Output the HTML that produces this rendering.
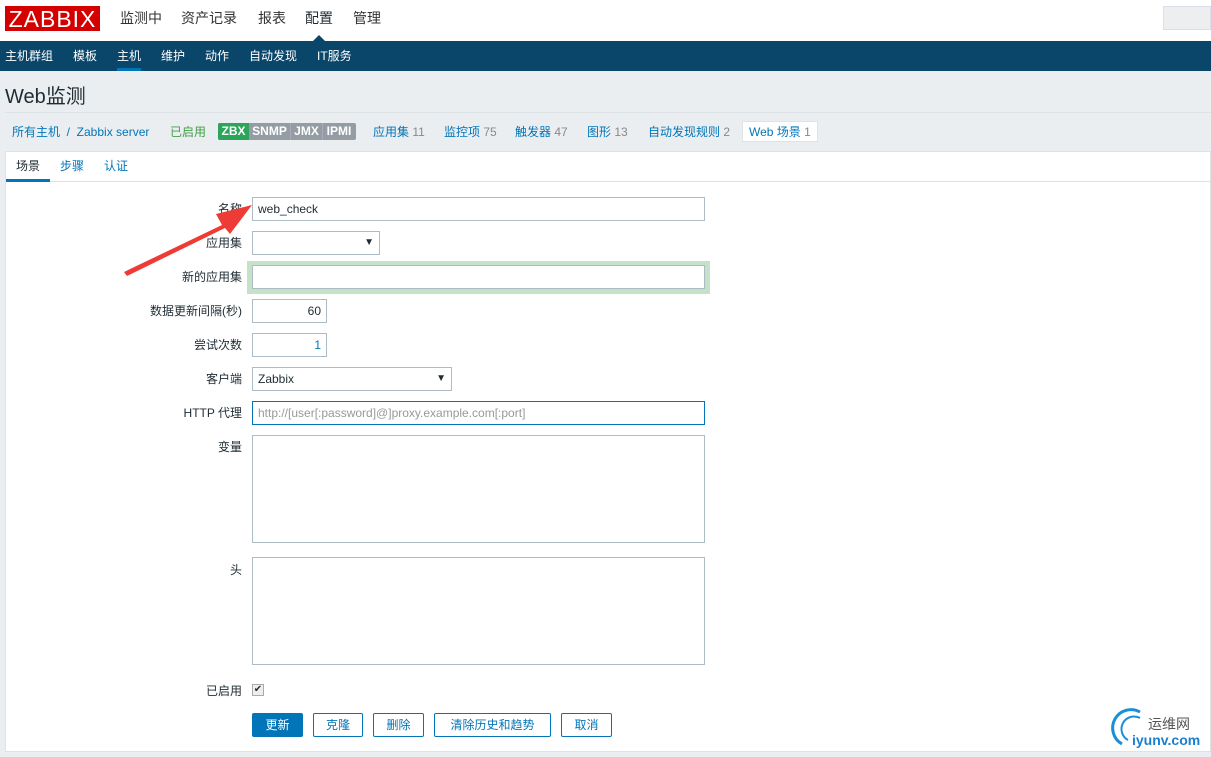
<!DOCTYPE html>
<html><head><meta charset="utf-8"><style>
*{box-sizing:border-box;margin:0;padding:0}
body{width:1211px;height:757px;overflow:hidden;background:#ebeef0;font-family:"Liberation Sans","Noto Sans CJK SC",sans-serif;font-size:12px;color:#1f2c33;position:relative}
.top{position:absolute;left:0;top:0;width:1211px;height:41px;background:#fff}
.logo{position:absolute;left:5px;top:6px;width:95px;height:25px;background:#d40000;color:#fff;font-size:23px;line-height:26px;text-align:center;letter-spacing:1px}
.mm{position:absolute;top:8px;font-size:14px;color:#333}
.nav{position:absolute;left:0;top:41px;width:1211px;height:30px;background:#0a466a}
.sm{position:absolute;top:47px;color:#fff;font-size:12px}
.abs{position:absolute}
.inp{position:absolute;background:#fff;border:1px solid #acbbc4;height:24px;font-size:12px;line-height:22px;padding:0 5px}
.lab{position:absolute;right:969px;font-size:12px;color:#1f2c33}
.btn{position:absolute;top:713px;height:24px;border:1px solid #0275b8;color:#0275b8;background:#fff;text-align:center;line-height:22px;font-size:12px;border-radius:2px}
</style></head><body>
<div class="top"></div>
<div class="logo">ZABBIX</div>
<div class="mm" style="left:120px">监测中</div>
<div class="mm" style="left:181px">资产记录</div>
<div class="mm" style="left:258px">报表</div>
<div class="mm" style="left:305px;color:#1f2c33">配置</div>
<div class="mm" style="left:353px">管理</div>
<div class="abs" style="left:1163px;top:6px;width:48px;height:24px;background:#eceeef;border:1px solid #dde"></div>
<div class="nav"></div>
<div class="abs" style="left:313px;top:35px;width:0;height:0;border-left:6px solid transparent;border-right:6px solid transparent;border-bottom:6px solid #0a466a"></div>
<div class="sm" style="left:5px">主机群组</div>
<div class="sm" style="left:73px">模板</div>
<div class="sm" style="left:117px">主机</div>
<div class="abs" style="left:117px;top:68px;width:24px;height:3px;background:#0275b8"></div>
<div class="sm" style="left:161px">维护</div>
<div class="sm" style="left:205px">动作</div>
<div class="sm" style="left:249px">自动发现</div>
<div class="sm" style="left:317px">IT服务</div>
<div class="abs" style="left:5px;top:80px;font-size:20px;color:#1f2c33">Web监测</div>
<div class="abs" style="left:5px;top:112px;width:1206px;height:1px;background:#dde2e6"></div>
<div class="abs" style="left:12px;top:123px;color:#0275b8">所有主机 &nbsp;/&nbsp; Zabbix server</div>
<div class="abs" style="left:170px;top:123px;color:#429e47">已启用</div>
<div class="abs" style="left:218px;top:123px;height:17px;width:138px;background:#949da3;border-radius:2px;color:#fff;font-weight:bold;font-size:12px;line-height:17px">
<span style="display:inline-block;width:31px;background:#2ca55a;text-align:center;border-radius:2px 0 0 2px">ZBX</span><span style="display:inline-block;width:42px;text-align:center;border-right:1px solid #aab">SNMP</span><span style="display:inline-block;width:32px;text-align:center;border-right:1px solid #aab">JMX</span><span style="display:inline-block;width:32px;text-align:center">IPMI</span></div>
<div class="abs" style="left:373px;top:123px;color:#0275b8">应用集 <span style="color:#888">11</span></div>
<div class="abs" style="left:444px;top:123px;color:#0275b8">监控项 <span style="color:#888">75</span></div>
<div class="abs" style="left:515px;top:123px;color:#0275b8">触发器 <span style="color:#888">47</span></div>
<div class="abs" style="left:587px;top:123px;color:#0275b8">图形 <span style="color:#888">13</span></div>
<div class="abs" style="left:648px;top:123px;color:#0275b8">自动发现规则 <span style="color:#888">2</span></div>
<div class="abs" style="left:742px;top:121px;width:76px;height:21px;background:#fff;border:1px solid #dde2e6;color:#0275b8;padding:1px 6px">Web 场景 <span style="color:#888">1</span></div>
<div class="abs" style="left:5px;top:151px;width:1206px;height:601px;background:#fff;border:1px solid #dde2e6"></div>
<div class="abs" style="left:16px;top:157px;color:#1f2c33">场景</div>
<div class="abs" style="left:60px;top:157px;color:#0275b8">步骤</div>
<div class="abs" style="left:104px;top:157px;color:#0275b8">认证</div>
<div class="abs" style="left:6px;top:181px;width:1205px;height:1px;background:#dde2e6"></div>
<div class="abs" style="left:6px;top:179px;width:44px;height:3px;background:#0275b8"></div>

<div class="lab" style="top:200px">名称</div><div class="inp" style="left:252px;top:197px;width:453px">web_check</div>
<div class="lab" style="top:234px">应用集</div><div class="inp" style="left:252px;top:231px;width:128px;text-align:right;font-size:10px">▼</div>
<div class="abs" style="left:247px;top:261px;width:463px;height:33px;background:#c5e1c7"></div>
<div class="lab" style="top:268px">新的应用集</div><div class="inp" style="left:252px;top:265px;width:453px"></div>
<div class="lab" style="top:302px">数据更新间隔(秒)</div><div class="inp" style="left:252px;top:299px;width:75px;text-align:right">60</div>
<div class="lab" style="top:336px">尝试次数</div><div class="inp" style="left:252px;top:333px;width:75px;text-align:right;color:#0275b8">1</div>
<div class="lab" style="top:370px">客户端</div><div class="inp" style="left:252px;top:367px;width:200px">Zabbix<span style="float:right;font-size:10px">▼</span></div>
<div class="lab" style="top:404px">HTTP 代理</div><div class="inp" style="left:252px;top:401px;width:453px;border-color:#0275b8;color:#999">http://[user[:password]@]proxy.example.com[:port]</div>
<div class="lab" style="top:438px">变量</div><div class="inp" style="left:252px;top:435px;width:453px;height:108px"></div>
<div class="lab" style="top:561px">头</div><div class="inp" style="left:252px;top:557px;width:453px;height:108px"></div>
<div class="lab" style="top:682px">已启用</div>
<div class="abs" style="left:252px;top:684px;width:12px;height:12px;border:1px solid #aaa;background:#eee;font-size:10px;line-height:10px;text-align:center">✔</div>
<div class="btn" style="left:252px;width:51px;background:#0275b8;color:#fff">更新</div>
<div class="btn" style="left:313px;width:50px">克隆</div>
<div class="btn" style="left:373px;width:51px">删除</div>
<div class="btn" style="left:434px;width:117px">清除历史和趋势</div>
<div class="btn" style="left:561px;width:51px">取消</div>
<svg class="abs" style="left:0;top:0" width="1211" height="757">
<polygon points="124,272 222,225 216,214 252,205 230,234 225,228 127,276" fill="#ef3b35"/>
<path d="M1122 744 A16 16 0 0 1 1140 712" stroke="#1a8fd8" stroke-width="3" fill="none"/>
<path d="M1128 740 A11 11 0 0 1 1140 718" stroke="#1a8fd8" stroke-width="2" fill="none"/>
</svg>
<div class="abs" style="left:1148px;top:714px;font-size:14px;color:#555">运维网</div>
<div class="abs" style="left:1132px;top:732px;font-size:14px;color:#1a7fd0;font-weight:bold">iyunv.com</div>
</body></html>
